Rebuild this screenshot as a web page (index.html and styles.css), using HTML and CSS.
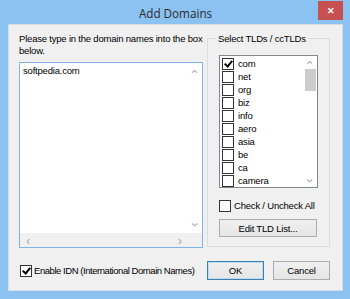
FILE: index.html
```html
<!DOCTYPE html>
<html lang="en">
<head>
    <meta charset="UTF-8">
    <title>Add Domains</title>
    <link rel="stylesheet" href="styles.css">
</head>
<body>
    <div class="window">
        <div class="titlebar">
            <span class="title">Add Domains</span>
            <div class="close">&#x2715;</div>
        </div>
        <div class="client">
            <div class="top-row">
                <div class="left-col">
                    <p class="hint">Please type in the domain names into the box below.</p>
                    <div class="textbox">
                        <div class="text-area">softpedia.com</div>
                        <div class="vscroll">
                            <span class="arrow up">&#x2039;</span>
                            <span class="arrow down">&#x203A;</span>
                        </div>
                        <div class="hscroll">
                            <span class="arrow">&#x2039;</span>
                            <span class="arrow">&#x203A;</span>
                        </div>
                        <div class="corner"></div>
                    </div>
                </div>
                <fieldset class="group">
                    <legend>Select TLDs / ccTLDs</legend>
                    <div class="listbox">
                        <ul class="items" id="tldList"></ul>
                        <div class="list-scroll">
                            <span class="arrow up">&#x2039;</span>
                            <div class="thumb"></div>
                            <span class="arrow down">&#x203A;</span>
                        </div>
                    </div>
                    <label class="check-all"><span class="box"></span>Check / Uncheck All</label>
                    <button class="btn edit">Edit TLD List...</button>
                </fieldset>
            </div>
            <div class="bottom-row">
                <label class="idn"><span class="box checked"></span>Enable IDN (International Domain Names)</label>
                <button class="btn default">OK</button>
                <button class="btn">Cancel</button>
            </div>
        </div>
    </div>
    <script>
        let tlds = ["com", "net", "org", "biz", "info", "aero", "asia", "be", "ca", "camera"];
        let list = document.getElementById("tldList");
        tlds.forEach((tld, i) => {
            let cls = i === 0 ? "box checked" : "box";
            list.innerHTML += `<li><span class="${cls}"></span>${tld}</li>`;
        });
    </script>
</body>
</html>
```

FILE: styles.css
```css
body {
    margin: 0;
    font-family: "Liberation Sans", Arial, sans-serif;
    font-size: 9.5px;
    letter-spacing: -0.2px;
    color: #000;
}
.window {
    width: 350px;
    height: 299px;
    background: #8cc2f2;
    display: flex;
    flex-direction: column;
    box-sizing: border-box;
    padding: 0 7px 8px 8px;
}
.titlebar {
    height: 24px;
    display: flex;
    align-items: center;
    justify-content: center;
    position: relative;
}
.title {
    font-family: "Open Sans", sans-serif;
    font-size: 11.7px;
    letter-spacing: 0;
    color: #2b2b2b;
    margin-top: 1px;
}
.close {
    position: absolute;
    right: 0;
    top: 1px;
    width: 25px;
    height: 19px;
    background: #c75050;
    color: #fff;
    font-size: 9px;
    font-weight: bold;
    display: flex;
    align-items: center;
    justify-content: center;
}
.client {
    flex: 1;
    background: #f0f0f0;
    border: 1px solid #d5dce4;
    padding: 8px 12px 0 10px;
    display: flex;
    flex-direction: column;
}
.top-row {
    display: flex;
    gap: 4px;
}
.left-col {
    width: 184px;
}
.hint {
    margin: 0;
    line-height: 12px;
    height: 28px;
}
.textbox {
    margin-top: 1px;
    height: 186px;
    border: 1px solid #7eb4ea;
    background: #fff;
    box-sizing: border-box;
    display: grid;
    grid-template-columns: 1fr 14px;
    grid-template-rows: 1fr 14px;
}
.text-area {
    padding: 2px 3px;
}
.vscroll, .hscroll, .corner, .list-scroll {
    background: #f0f0f0;
    display: flex;
    color: #a8a8a8;
}
.vscroll {
    flex-direction: column;
    justify-content: space-between;
    align-items: center;
    background: #fff;
    padding: 2px 0;
}
.hscroll {
    justify-content: space-between;
    align-items: center;
    padding: 0 6px;
}
.arrow {
    font-size: 13px;
    line-height: 13px;
    height: 13px;
    display: block;
}
.arrow.up, .arrow.down {
    transform: rotate(90deg);
}
.group {
    width: 123px;
    box-sizing: border-box;
    margin: 0;
    padding: 11px 11px 0 11px;
    border: 1px solid #dcdcdc;
    height: 214px;
}
legend {
    padding: 0 2px;
    margin-left: -3px;
}
.listbox {
    height: 133px;
    border: 1px solid #828790;
    background: #fff;
    display: flex;
    box-sizing: border-box;
}
.items {
    list-style: none;
    margin: 0;
    padding: 1px 0 0 2px;
    flex: 1;
    overflow: hidden;
}
.items li {
    height: 13px;
    display: flex;
    align-items: center;
    gap: 4px;
}
.box {
    width: 10px;
    height: 10px;
    border: 1px solid #333;
    background: #fff;
    display: inline-block;
    position: relative;
    flex-shrink: 0;
}
.box.checked::after {
    content: "";
    position: absolute;
    left: 3px;
    top: 0px;
    width: 3px;
    height: 6px;
    border: solid #000;
    border-width: 0 2px 2px 0;
    transform: rotate(40deg);
}
.list-scroll {
    width: 13px;
    flex-direction: column;
    align-items: center;
    background: #fff;
}
.list-scroll .thumb {
    width: 11px;
    height: 22px;
    background: #cdcdcd;
}
.list-scroll .down {
    margin-top: auto;
}
.check-all {
    display: flex;
    align-items: center;
    gap: 3px;
    margin-top: 11px;
    height: 13px;
    white-space: nowrap;
}
.btn {
    font-family: "Liberation Sans", Arial, sans-serif;
    font-size: 9.5px;
    letter-spacing: -0.2px;
    background: linear-gradient(#f0f0f0, #e5e5e5);
    border: 1px solid #acacac;
    height: 18px;
    padding: 0;
    color: #000;
}
.edit {
    width: 98px;
    margin-top: 7px;
}
.bottom-row {
    display: flex;
    align-items: center;
    margin-top: 13px;
    gap: 9px;
}
.idn {
    display: flex;
    align-items: center;
    gap: 2px;
    flex: 1;
    min-width: 0;
    margin-left: 1px;
    white-space: nowrap;
    letter-spacing: -0.45px;
}
.bottom-row .btn {
    width: 57px;
    height: 19px;
    flex-shrink: 0;
}
.btn.default {
    border-color: #3c7fb1;
    box-shadow: inset 0 0 0 1px #bcdcf4;
}
```
